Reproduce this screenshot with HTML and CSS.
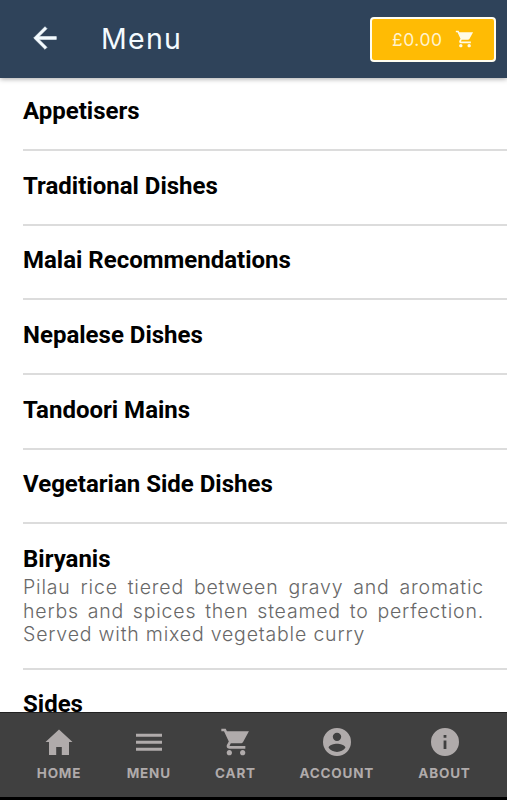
FILE: index.html
```html
<!DOCTYPE html>
<html lang="en">
<head>
<meta charset="UTF-8">
<meta name="viewport" content="width=device-width, initial-scale=1">
<title>Menu</title>
<link rel="stylesheet" href="styles.css">
</head>
<body>
<header class="topbar">
	<a class="back" href="#" aria-label="Back">
		<svg viewBox="0 0 24 24"><path d="M20 11H7.83l5.59-5.59L12 4l-8 8 8 8 1.41-1.41L7.83 13H20v-2z"/></svg>
	</a>
	<h1>Menu</h1>
	<button class="basket">
		<span>£0.00</span>
		<svg viewBox="0 0 24 24"><path d="M7 18c-1.1 0-1.99.9-1.99 2S5.9 22 7 22s2-.9 2-2-.9-2-2-2zM1 2v2h2l3.6 7.59-1.35 2.45C4.52 15.37 5.48 17 7 17h12v-2H7.42l-.25-.25L8.1 13h7.45c.75 0 1.41-.41 1.75-1.03L21.7 4H5.21l-.94-2H1zm16 16c-1.1 0-1.99.9-1.99 2s.89 2 1.99 2 2-.9 2-2-.9-2-2-2z"/></svg>
	</button>
</header>

<main class="list">
	<section class="item"><h2>Appetisers</h2></section>
	<section class="item"><h2>Traditional Dishes</h2></section>
	<section class="item"><h2>Malai Recommendations</h2></section>
	<section class="item"><h2>Nepalese Dishes</h2></section>
	<section class="item"><h2>Tandoori Mains</h2></section>
	<section class="item"><h2>Vegetarian Side Dishes</h2></section>
	<section class="item">
		<h2>Biryanis</h2>
		<p>Pilau rice tiered between gravy and aromatic herbs and spices then steamed to perfection. Served with mixed vegetable curry</p>
	</section>
	<section class="item"><h2>Sides</h2></section>
</main>

<nav class="tabs">
	<a class="tab tab-home" href="#">
		<svg viewBox="0 0 28 28"><path d="M14 1.500L.5 14H4v13h7.200v-8h5.600v8H24V14h3.500z"/></svg>
		<span>HOME</span>
	</a>
	<a class="tab tab-menu" href="#">
		<svg viewBox="0 0 28 28"><path d="M1 5.700h26v3H1zM1 12.700h26v3H1zM1 19.700h26v3H1z"/></svg>
		<span>MENU</span>
	</a>
	<a class="tab tab-cart" href="#">
		<svg viewBox="0 0 24 24"><path d="M7 18c-1.1 0-1.99.9-1.99 2S5.9 22 7 22s2-.9 2-2-.9-2-2-2zM1 2v2h2l3.6 7.59-1.35 2.45C4.52 15.37 5.48 17 7 17h12v-2H7.42l-.25-.25L8.1 13h7.45c.75 0 1.41-.41 1.75-1.03L21.7 4H5.21l-.94-2H1zm16 16c-1.1 0-1.99.9-1.99 2s.89 2 1.99 2 2-.9 2-2-.9-2-2-2z"/></svg>
		<span>CART</span>
	</a>
	<a class="tab tab-account" href="#">
		<svg viewBox="0 0 24 24"><path fill-rule="evenodd" d="M12 0a12 12 0 1 0 0 24 12 12 0 0 0 0-24zM12 4a3.6 3.6 0 1 1 0 7.2A3.6 3.6 0 0 1 12 4zM12 20.5c-3 0-5.6-1.300-7.200-3.500.1-2.400 4.800-3.500 7.200-3.500s7.100 1.100 7.200 3.500c-1.600 2.200-4.200 3.500-7.200 3.500z"/></svg>
		<span>ACCOUNT</span>
	</a>
	<a class="tab tab-about" href="#">
		<svg viewBox="0 0 24 24"><path fill-rule="evenodd" d="M12 0a12 12 0 1 0 0 24 12 12 0 0 0 0-24zM10.800 6h2.400v2.400h-2.400zM10.800 10.800h2.400V18h-2.400z"/></svg>
		<span>ABOUT</span>
	</a>
</nav>
</body>
</html>
```
FILE: styles.css
```css
* {
	box-sizing: border-box;
}
body {
	margin: 0;
	height: 800px;
	display: flex;
	flex-direction: column;
	overflow: hidden;
	background-color: #fff;
	font-family: Inter, "Open Sans", sans-serif;
}
svg {
	display: block;
	fill: currentColor;
}

/* top bar */
.topbar {
	position: relative;
	flex: 0 0 78px;
	display: flex;
	align-items: center;
	padding: 0 11px 0 28px;
	background-color: #2f435a;
	color: #f4fbff;
	box-shadow: 0 1px 5px rgba(0, 0, 0, 0.35);
}
.back {
	padding-bottom: 2px;
	color: inherit;
}
.back svg {
	width: 34px;
	height: 34px;
	stroke: currentColor;
	stroke-width: 0.4;
}
.topbar h1 {
	margin: 0 auto 0 39px;
	font-size: 28.5px;
	font-weight: 400;
	line-height: 36px;
	letter-spacing: 1.3px;
}
.basket {
	width: 126px;
	height: 45px;
	display: flex;
	align-items: center;
	justify-content: space-between;
	padding: 0 19px 0 20px;
	border: 2px solid #fffdf0;
	border-radius: 4px;
	background-color: #ffbb04;
	color: #fff3cf;
	font-family: inherit;
	font-size: 17.5px;
	letter-spacing: 0.5px;
}
.basket svg {
	width: 20px;
	height: 20px;
	color: #fffbe8;
}

/* categories */
.list {
	flex: 1;
	min-height: 0;
	overflow: hidden;
	padding-left: 23px;
}
.item {
	min-height: 74.7px;
	padding: 20.600px 23px 20px 0;
	border-bottom: 2px solid #dcdcdc;
}
.item:first-child {
	min-height: 73px;
	padding-top: 19px;
}
.item h2 {
	margin: 0;
	color: #000;
	font-family: Roboto, sans-serif;
	font-size: 24px;
	font-weight: 700;
	line-height: 28px;
}
.item p {
	margin: 3px 0 0;
	padding-bottom: 1px;
	color: #686868;
	font-size: 19.5px;
	font-weight: 300;
	line-height: 23.500px;
	letter-spacing: 0.81px;
	text-align: justify;
}

/* bottom tabs */
.tabs {
	flex: 0 0 88px;
	display: flex;
	justify-content: space-between;
	padding: 15px 36px 0;
	border-top: 1px solid #222;
	border-bottom: 3px solid #000;
	background-color: #404040;
}
.tab {
	display: flex;
	flex-direction: column;
	align-items: center;
	color: #b0abab;
	font-size: 13.5px;
	font-weight: 700;
	line-height: 16px;
	letter-spacing: 0.8px;
	text-decoration: none;
	white-space: nowrap;
}
.tab svg {
	width: 28px;
	height: 28px;
	margin-bottom: 9px;
}
.tab-cart svg {
	width: 32px;
	height: 32px;
	margin: -2px 0 7px 1px;
}
.tab-home {
	width: 46px;
}
.tab-menu {
	width: 45px;
}
.tab-cart {
	width: 40px;
}
.tab-account {
	width: 74px;
}
.tab-about {
	width: 53px;
}
```
